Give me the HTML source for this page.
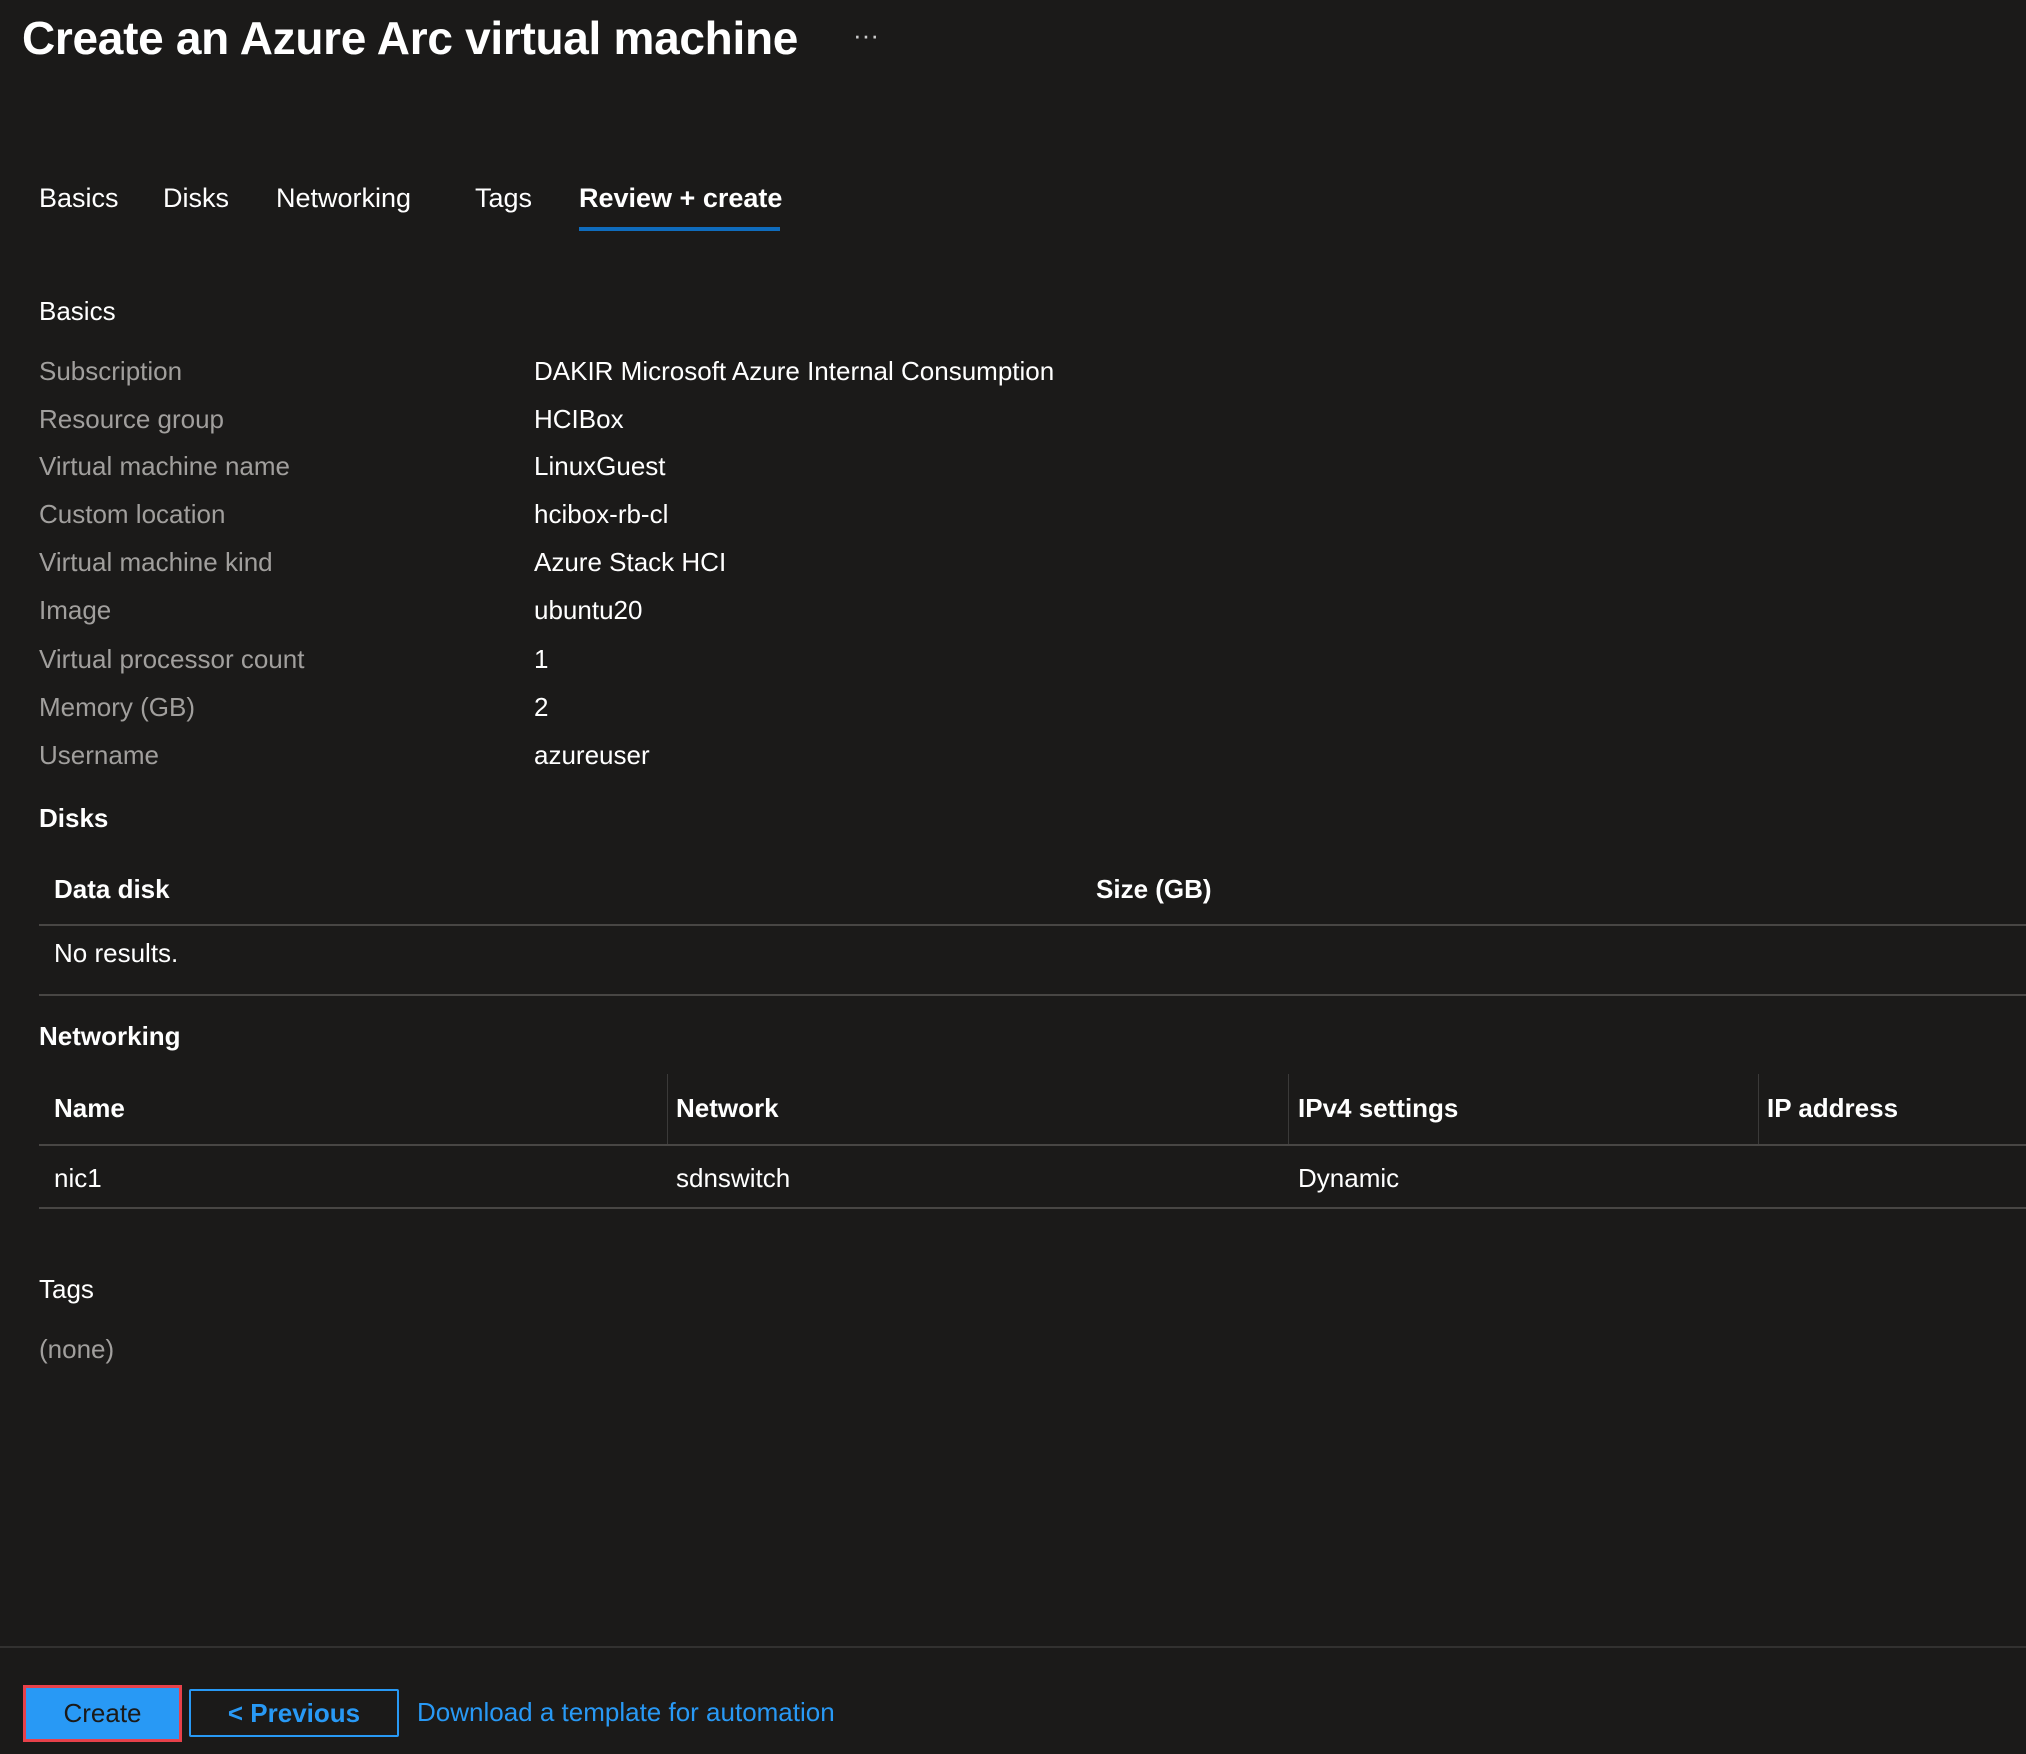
<!DOCTYPE html>
<html><head><style>
body{margin:0;width:2026px;height:1754px;background:#1b1a19;font-family:"Liberation Sans",sans-serif;color:#fff;position:relative;overflow:hidden}
.a{position:absolute;white-space:nowrap}
.t{font-size:26px;line-height:30px;transform:translateY(-15px)}
.l{color:#a19f9d}
.b{font-weight:bold}
.h{position:absolute;height:2px;background:#484644;left:39px;right:0}
.v{position:absolute;width:1px;background:#3b3a39;top:1074px;height:71px}
</style></head><body>
<div class="a" style="left:22px;top:8px;font-size:46px;line-height:60px;font-weight:bold;letter-spacing:-0.3px">Create an Azure Arc virtual machine</div>
<div class="a" style="left:853px;top:20px;font-size:26px;color:#ccc">···</div>
<div class="a t" style="left:39px;top:198px;font-size:27px">Basics</div>
<div class="a t" style="left:163px;top:198px;font-size:27px">Disks</div>
<div class="a t" style="left:276px;top:198px;font-size:27px">Networking</div>
<div class="a t" style="left:475px;top:198px;font-size:27px">Tags</div>
<div class="a t b" style="left:579px;top:198px;font-size:27px">Review + create</div>
<div class="a" style="left:579px;top:227px;width:201px;height:4px;background:#0f6cbd"></div>

<div class="a t" style="left:39px;top:311px">Basics</div>
<div class="a t l" style="left:39px;top:371px">Subscription</div><div class="a t" style="left:534px;top:371px">DAKIR Microsoft Azure Internal Consumption</div>
<div class="a t l" style="left:39px;top:419px">Resource group</div><div class="a t" style="left:534px;top:419px">HCIBox</div>
<div class="a t l" style="left:39px;top:466px">Virtual machine name</div><div class="a t" style="left:534px;top:466px">LinuxGuest</div>
<div class="a t l" style="left:39px;top:514px">Custom location</div><div class="a t" style="left:534px;top:514px">hcibox-rb-cl</div>
<div class="a t l" style="left:39px;top:562px">Virtual machine kind</div><div class="a t" style="left:534px;top:562px">Azure Stack HCI</div>
<div class="a t l" style="left:39px;top:610px">Image</div><div class="a t" style="left:534px;top:610px">ubuntu20</div>
<div class="a t l" style="left:39px;top:659px">Virtual processor count</div><div class="a t" style="left:534px;top:659px">1</div>
<div class="a t l" style="left:39px;top:707px">Memory (GB)</div><div class="a t" style="left:534px;top:707px">2</div>
<div class="a t l" style="left:39px;top:755px">Username</div><div class="a t" style="left:534px;top:755px">azureuser</div>

<div class="a t b" style="left:39px;top:818px">Disks</div>
<div class="a t b" style="left:54px;top:889px">Data disk</div>
<div class="a t b" style="left:1096px;top:889px">Size (GB)</div>
<div class="h" style="top:924px"></div>
<div class="a t" style="left:54px;top:953px">No results.</div>
<div class="h" style="top:994px"></div>

<div class="a t b" style="left:39px;top:1036px">Networking</div>
<div class="v" style="left:667px"></div><div class="v" style="left:1288px"></div><div class="v" style="left:1758px"></div>
<div class="a t b" style="left:54px;top:1108px">Name</div>
<div class="a t b" style="left:676px;top:1108px">Network</div>
<div class="a t b" style="left:1298px;top:1108px">IPv4 settings</div>
<div class="a t b" style="left:1767px;top:1108px">IP address</div>
<div class="h" style="top:1144px"></div>
<div class="a t" style="left:54px;top:1178px">nic1</div>
<div class="a t" style="left:676px;top:1178px">sdnswitch</div>
<div class="a t" style="left:1298px;top:1178px">Dynamic</div>
<div class="h" style="top:1207px"></div>

<div class="a t" style="left:39px;top:1289px">Tags</div>
<div class="a t l" style="left:39px;top:1349px">(none)</div>

<div class="a" style="left:0;right:0;top:1646px;height:2px;background:#323130"></div>
<div class="a" style="left:23px;top:1685px;width:153px;height:51px;border:3px solid #e8414a;background:#2899f5;color:#1b1a19;font-size:26px;line-height:51px;text-align:center">Create</div>
<div class="a" style="left:189px;top:1689px;width:206px;height:44px;border:2px solid #2899f5;border-radius:2px;color:#2899f5;font-size:26px;line-height:44px;text-align:center;font-weight:600">&lt; Previous</div>
<div class="a t" style="left:417px;top:1712px;color:#2899f5">Download a template for automation</div>
</body></html>
